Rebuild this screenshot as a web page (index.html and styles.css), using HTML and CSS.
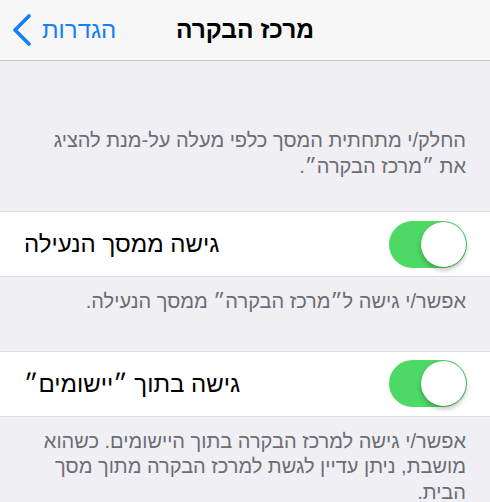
FILE: index.html
```html
<!DOCTYPE html>
<html lang="he">
<head>
    <meta charset="UTF-8">
    <meta name="viewport" content="width=device-width, initial-scale=1.0">
    <title>מרכז הבקרה</title>
    <link rel="stylesheet" href="styles.css">
</head>
<body>

    <!-- Barre de navigation -->
    <div class="nav-bar">
        <a class="back-link" href="#">
            <svg class="chevron" width="20" height="32" viewBox="0 0 20 32">
                <polyline points="17,2 3,16 17,30" fill="none" stroke="#147efb" stroke-width="3.6" stroke-linecap="round" stroke-linejoin="round"/>
            </svg>
            <span dir="rtl">הגדרות</span>
        </a>
        <div class="nav-title" dir="rtl">מרכז הבקרה</div>
        <div></div>
    </div>

    <p class="footer first" dir="rtl">החלק/י מתחתית המסך כלפי מעלה על-מנת להציג את ״מרכז הבקרה״.</p>

    <div class="cell">
        <span class="label" dir="rtl">גישה ממסך הנעילה</span>
        <span class="switch on"></span>
    </div>
    <p class="footer" dir="rtl">אפשר/י גישה ל״מרכז הבקרה״ ממסך הנעילה.</p>

    <div class="cell">
        <span class="label" dir="rtl">גישה בתוך ״יישומים״</span>
        <span class="switch on"></span>
    </div>
    <p class="footer last" dir="rtl">אפשר/י גישה למרכז הבקרה בתוך היישומים. כשהוא מושבת, ניתן עדיין לגשת למרכז הבקרה מתוך מסך הבית.</p>

</body>
</html>
```

FILE: styles.css
```css
body {
    margin: 0;
    font-family: "Liberation Sans", "DejaVu Sans", sans-serif;
    background-color: #efeff4;
    color: #000;
}

/* Barre du haut */
.nav-bar {
    height: 60px;
    display: grid;
    grid-template-columns: 1fr auto 1fr;
    align-items: center;
    background-color: #f7f7f7;
    border-bottom: 1px solid #c4c4c8;
}

.back-link {
    display: flex;
    align-items: center;
    gap: 10px;
    padding-left: 12px;
    color: #147efb;
    text-decoration: none;
    font-size: 24px;
}

.nav-title {
    font-size: 24.5px;
    font-weight: bold;
}

/* Textes gris sous les cellules */
.footer {
    margin: 0;
    padding: 12px 24px 36px;
    font-size: 20px;
    line-height: 25.5px;
    color: #6d6d72;
}

.footer.first {
    padding-top: 67px;
    padding-bottom: 32px;
}

.footer.last {
    padding-bottom: 0;
}

/* Cellules blanches */
.cell {
    height: 64px;
    display: flex;
    align-items: center;
    justify-content: space-between;
    padding: 0 23px 0 24px;
    background-color: #fff;
    border-top: 1px solid #dcdce0;
    border-bottom: 1px solid #dcdce0;
}

.label {
    font-size: 24px;
}

/* Interrupteur */
.switch {
    position: relative;
    width: 78px;
    height: 47px;
    border-radius: 24px;
    background-color: #e5e5ea;
}

.switch.on {
    background-color: #4cd964;
}

.switch::after {
    content: "";
    position: absolute;
    top: 1px;
    right: 1px;
    width: 45px;
    height: 45px;
    border-radius: 50%;
    background-color: #fff;
    box-shadow: 0 3px 5px rgba(0, 0, 0, 0.25), 0 0 0 0.5px rgba(0, 0, 0, 0.08);
}
```
